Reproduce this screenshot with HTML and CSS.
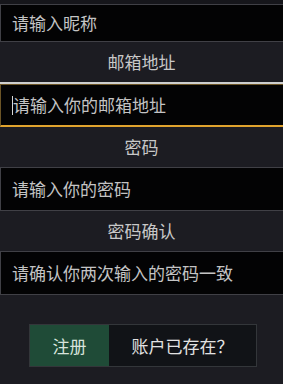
FILE: index.html
```html
<!DOCTYPE html>
<html lang="zh">
<head>
<meta charset="utf-8">
<link rel="stylesheet" href="styles.css">
</head>
<body>
<div class="form">
  <div class="top-strip"></div>
  <div class="field first"><span class="ph">请输入昵称</span></div>
  <div class="label">邮箱地址</div>
  <div class="focus-wrap">
    <div class="field focused"><span class="caret"></span><span class="ph">请输入你的邮箱地址</span></div>
  </div>
  <div class="label">密码</div>
  <div class="field"><span class="ph">请输入你的密码</span></div>
  <div class="label">密码确认</div>
  <div class="field"><span class="ph">请确认你两次输入的密码一致</span></div>
  <div class="actions">
    <div class="btn-group">
      <div class="btn primary">注册</div>
      <div class="btn secondary">账户已存在？</div>
    </div>
  </div>
</div>
</body>
</html>
```
FILE: styles.css
```css
html, body {
  margin: 0;
  padding: 0;
  background: #1c1c22;
  height: 384px;
  overflow: hidden;
}
.form {
  display: flex;
  flex-direction: column;
  font-family: "Noto Sans CJK SC", "Noto Sans", sans-serif;
  font-size: 17px;
  color: #c4c4c4;
}
.top-strip {
  height: 4px;
  background: #16161b;
}
.field {
  box-sizing: border-box;
  height: 44px;
  width: 290px;
  background: #030304;
  border: 1px solid #404046;
  display: flex;
  align-items: center;
  padding-left: 11px;
  line-height: 20px;
}
.field.first {
  height: 38px;
}
.label {
  height: 40px;
  display: flex;
  align-items: center;
  justify-content: center;
  line-height: 20px;
  color: #c8c8c8;
}
.focus-wrap {
  border-top: 2px solid #cfcfcf;
}
.field.focused {
  height: 43px;
  border: 1px solid #6b5426;
  border-bottom: 2px solid #e0a32e;
  padding-left: 11px;
}
.caret {
  width: 1px;
  height: 19px;
  background: #d8d8d8;
  margin-right: 0;
}
.ph {
  white-space: nowrap;
}
.actions {
  display: flex;
  padding: 29px 0 0 29px;
}
.btn-group {
  display: flex;
  border: 1px solid #33363a;
  height: 43px;
  box-sizing: border-box;
  width: 228px;
}
.btn {
  display: flex;
  align-items: center;
  justify-content: center;
  line-height: 20px;
}
.primary {
  width: 79px;
  background: #1f4b37;
  color: #d8e4dc;
}
.secondary {
  flex: 1;
  background: #111317;
  color: #e2e2e2;
}
```
